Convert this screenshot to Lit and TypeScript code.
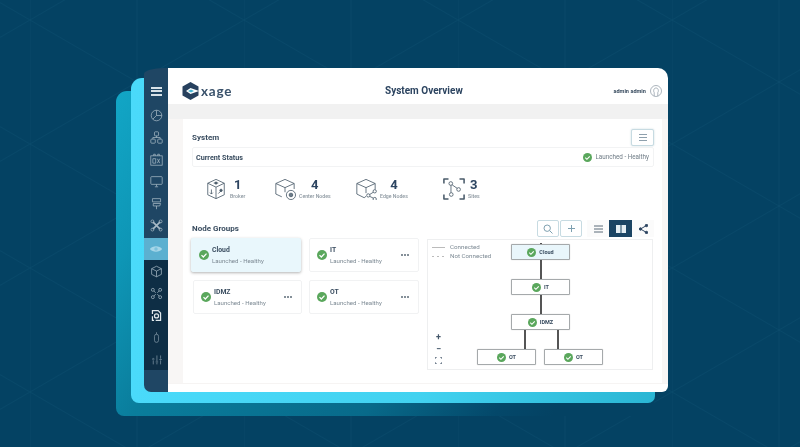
import { LitElement, html, css, svg } from "lit";
import { customElement } from "lit/decorators.js";

const check = (s = 10) => html`<svg class="check" width=${s} height=${s} viewBox="0 0 12 12"><circle cx="6" cy="6" r="6" fill="#5aa75c"/><path d="M3 6.2l2.2 2.2L9 4.4" fill="none" stroke="#fff" stroke-width="1.5"/></svg>`;

const navIcons = [
  svg`<circle cx="8" cy="8" r="6.5"/><path d="M8 1.500V8h6.500M8 8l-4.500 4.500"/>`,
  svg`<rect x="5.500" y="1" width="5" height="5" rx="1"/><rect x="1" y="10" width="5.500" height="5" rx="1"/><rect x="9.500" y="10" width="5.500" height="5" rx="1"/><path d="M8 6v2M3.500 10V8h9v2"/>`,
  svg`<rect x="1" y="3.500" width="14" height="11.500"/><path d="M4.500 3.500V1.500h2v2M9.500 3.500V1.500h2v2M3.500 7h3.500v5.500H3.500zM9 7l3 5.500M12 7l-3 5.500"/>`,
  svg`<rect x="1" y="2" width="14" height="9.500" rx="1"/><path d="M8 11.500V14M6 14.500h4"/>`,
  svg`<path d="M3 2h10v4H3zM4 8h9l-1 3H4zM8 11v4"/>`,
  svg`<path d="M3.500 3.500l9 9M12.500 3.500l-9 9" stroke-width="2"/><circle cx="3" cy="3" r="1.800"/><circle cx="13" cy="13" r="1.800"/><circle cx="13" cy="3" r="1.800"/><circle cx="3" cy="13" r="1.800"/>`,
];
const eye = svg`<path d="M1 8C4 3.800 12 3.800 15 8 12 12.200 4 12.200 1 8z" fill="#a6d6e8" stroke="none"/><circle cx="8" cy="8" r="2" fill="#7cc2dc" stroke="none"/>`;
const navIcons2 = [
  { c: "mid", i: svg`<path d="M8 1.500l6 3v7l-6 3-6-3v-7zM2 4.500l6 3 6-3M8 7.500v7"/>` },
  { c: "mid", i: svg`<circle cx="3.500" cy="3.500" r="1.800"/><circle cx="12.500" cy="3.500" r="1.800"/><circle cx="3.500" cy="12.500" r="1.800"/><circle cx="12.500" cy="12.500" r="1.800"/><path d="M5 5l2 2.200M11 5L9 7.200M5 11l2-2.200M11 11L9 8.800" />` },
  { c: "hi", i: svg`<path d="M3 6V2h7l3 3v9H7M3 9v5h2" stroke-width="1.500"/><circle cx="8" cy="8.500" r="2.500" stroke-width="1.500"/>` },
  { c: "lo", i: svg`<path d="M8 4a2.500 2.500 0 0 1 2.500 2.500v5a2.500 2.500 0 0 1-5 0v-5A2.500 2.500 0 0 1 8 4zM8 1.500V4"/>` },
  { c: "lo", i: svg`<path d="M4 14V9M4 7V6M8.500 14v-2M8.500 10V3M13 14V9M13 7V3"/><path d="M2.500 7.500h3M7 11h3M11.500 8h3"/>` },
];

const brokerIcon = svg`<path d="M12 1.500l9 4.200v12.600l-9 4.200-9-4.200V5.700zM3 5.700l9 4.300 9-4.300M12 10v12.500"/><path d="M7 12.500v5M5.500 16l1.500 1.500L8.500 16M14.500 17l3-3M9.500 5.500h5" stroke-width=".9"/><circle cx="17.500" cy="13.500" r="1.300" fill="#4a5b6a"/><circle cx="12" cy="5.500" r="1.200" fill="#4a5b6a"/>`;
const centerIcon = svg`<path d="M8.500 20.500L2 17.500V6L12 1.500 22 6v6M2 6l10 4.500L22 6M12 10.500v5"/><circle cx="18.500" cy="18.500" r="5"/><circle cx="18.500" cy="18.500" r="2" fill="#6b7b88"/>`;
const edgeIcon = svg`<path d="M12 20l-2 1.500-8-4V6L12 1.500 22 6v6.500M2 6l10 4.500L22 6M12 10.500v6"/><circle cx="21.500" cy="14.500" r="1.800"/><circle cx="14.500" cy="19" r="1.800"/><circle cx="21.500" cy="23" r="1.800"/><path d="M16 18l4-2.500M16 20l4 2"/>`;
const sitesIcon = svg`<path d="M1 6V1h5M18 1h5v5M1 18v5h5M23 18v5h-5" stroke-width="1.700"/><circle cx="8.500" cy="6" r="2"/><circle cx="17" cy="12.500" r="2"/><circle cx="9" cy="18" r="2"/><path d="M10 7.500l5.500 3.800M8.700 8v8"/>`;

const stats = [
  { n: "1", l: "Broker", i: brokerIcon, vb: "0 0 24 24" },
  { n: "4", l: "Center Nodes", i: centerIcon, vb: "0 0 24 24" },
  { n: "4", l: "Edge Nodes", i: edgeIcon, vb: "0 0 24 24" },
  { n: "3", l: "Sites", i: sitesIcon, vb: "0 0 24 24" },
];

@customElement("app-root")
export class AppRoot extends LitElement {
  static styles = css`
    :host { display: block; width: 800px; height: 447px; overflow: hidden; font-family: Roboto, "Liberation Sans", sans-serif; color: #3a4d60; }
    .desk { position: relative; width: 800px; height: 447px; background: #044263; overflow: hidden; filter: blur(0.5px); }
    .grid { position: absolute; inset: 0; }
    .back2 { position: absolute; left: 116px; top: 91px; width: 538px; height: 325px; border-radius: 11px 0 8px 8px; background: linear-gradient(120deg, #12a6c6 0%, #0e96b6 14%, #0a7d9c 28%, #086a8a 60%, #04486a 78%, #044263 86%); }
    .back1 { position: absolute; left: 131px; top: 78px; width: 524px; height: 325px; border-radius: 11px 0 7px 8px; background: linear-gradient(90deg, #4adafa 0%, #42d2f0 55%, #2ab6d4 100%); }
    .win { position: absolute; left: 144px; top: 68px; width: 524px; height: 324px; display: flex; }
    .side { width: 24px; flex: none; background: #1f4664; display: flex; flex-direction: column; align-items: center; padding-top: 12px; box-sizing: border-box; border-radius: 20px 0 0 7px / 6px 0 0 7px; }
    .row { height: 22px; width: 100%; flex: none; display: flex; align-items: center; justify-content: center; }
    .burger { width: 11px; height: 9px; border-top: 2px solid #d8e2e8; border-bottom: 2px solid #d8e2e8; position: relative; box-sizing: border-box; }
    .burger::after { content: ""; position: absolute; left: 0; right: 0; top: 1.5px; height: 2px; background: #d8e2e8; }
    .top-nav { margin-top: 2.5px; flex: none; width: 100%; }
    .side svg { fill: none; stroke: #a9bac6; stroke-width: .9; display: block; }
    .active { margin-top: 1.5px; background: #5cb0d0; }
    .low { flex: none; width: 100%; background: #0e2e45; }
    .side .mid svg { stroke: #a9bac6; }
    .side .hi svg { stroke: #e0e8ec; }
    .side .lo svg { stroke: #7f95a4; }
    .main { flex: 1; display: flex; flex-direction: column; min-width: 0; background: #fff; border-radius: 0 10px 6px 0; overflow: hidden; }
    .top { height: 36px; flex: none; display: flex; align-items: center; justify-content: space-between; padding: 10px 6px 0 14px; box-sizing: border-box; position: relative; }
    .logo { display: flex; align-items: center; gap: 2px; font-family: Lato, sans-serif; font-size: 13.5px; font-weight: 700; letter-spacing: .8px; color: #3a526b; }
    .title { position: absolute; left: 217px; top: 16px; font-size: 10px; line-height: 14px; font-weight: 700; color: #2c4460; }
    .user { display: flex; align-items: center; gap: 4px; font-size: 5.6px; font-weight: 700; color: #3a4d60; }
    .band { height: 15px; flex: none; background: #f1f1f1; }
    .body { flex: 1; background: #f8f6f5; padding: 0 6px 0 15px; margin-bottom: 8px; display: flex; min-height: 0; border-bottom: 1px solid #f6f4f3; }
    .panel { flex: 1; background: #fff; display: flex; flex-direction: column; padding: 10px 8px 0 9px; min-width: 0; }
    .sys { display: flex; align-items: center; justify-content: space-between; height: 17px; flex: none; font-size: 8px; font-weight: 700; letter-spacing: .05px; }
    .box-btn { width: 23px; height: 17px; border: 1px solid #c7dbe2; border-radius: 2px; display: flex; align-items: center; justify-content: center; background: #fff; box-sizing: border-box; box-shadow: 0 0 2px rgba(120,160,175,.4); }
    .lines { width: 8px; height: 5px; border-top: 1px solid #8ea0ad; border-bottom: 1px solid #8ea0ad; position: relative; }
    .lines::after { content: ""; position: absolute; left: 0; right: 0; top: 2px; height: 1px; background: #8ea0ad; }
    .status { margin-top: 1px; height: 20px; flex: none; border: 1px solid #f2f3f4; border-radius: 2px; display: flex; align-items: center; justify-content: space-between; padding: 0 4px 0 3px; box-sizing: border-box; font-size: 7.2px; }
    .status b { font-weight: 700; }
    .health { display: flex; align-items: center; gap: 3px; color: #6f7c86; font-size: 6.3px; }
    .stats { height: 43px; flex: none; display: flex; align-items: center; padding-left: 13px; }
    .stat { display: flex; align-items: center; gap: 3px; }
    .stat:nth-child(1) { width: 69px; } .stat:nth-child(2) { width: 81px; } .stat:nth-child(3) { width: 88px; }
    .stat svg { fill: none; stroke: #4a5b6a; stroke-width: .9; stroke-linejoin: round; flex: none; }
    .stat .t { display: flex; flex-direction: column; align-items: center; gap: 2px; }
    .stat .n { font-size: 13px; line-height: 12px; font-weight: 700; color: #2c4460; }
    .stat .l { font-size: 5.2px; line-height: 6px; color: #8b969f; font-weight: 500; }
    .ng-head { display: flex; align-items: center; justify-content: space-between; height: 17px; flex: none; margin-top: 10px; font-size: 8px; font-weight: 700; }
    .tools { display: flex; align-items: center; }
    .tool { width: 22px; height: 17px; border: 1px solid #c7dbe2; border-radius: 2px; display: flex; align-items: center; justify-content: center; margin-right: 1px; background: #fff; box-sizing: border-box; }
    .seg { width: 22px; height: 17px; display: flex; align-items: center; justify-content: center; background: #fbfbfb; }
    .seg.first { margin-left: 4px; }
    .seg.on { width: 23px; background: #1b4463; }
    .content { display: flex; margin-top: 1px; flex: 1; min-height: 0; align-items: flex-start; }
    .cards { width: 235px; flex: none; display: grid; grid-template-columns: 110px 110px; grid-auto-rows: 34px; gap: 8px 7px; }
    .card { border: 1px solid #f1f2f3; border-radius: 2px; display: flex; align-items: center; padding-left: 7px; gap: 3px; position: relative; background: #fff; }
    .card.sel { background: #e9f7fc; border-color: #e9f7fc; margin: 0 1px 0 -1px; box-shadow: 0 1px 3px rgba(0,0,0,.3); }
    .card.in { margin-left: 1px; }
    .card .nm { font-size: 6.8px; font-weight: 700; line-height: 9px; }
    .card .st { font-size: 6.1px; color: #7d8a94; line-height: 9px; margin-top: 1px; }
    .dots { position: absolute; right: 9px; top: 15px; display: flex; gap: 1px; }
    .dots i { width: 2px; height: 2px; border-radius: 50%; background: #5c6b77; }
    .graph { width: 226px; height: 131px; margin-top: 1px; flex: none; border: 1px solid #eeeff0; box-sizing: border-box; position: relative; }
    .legend { position: absolute; left: 4px; top: 2.5px; display: grid; grid-template-columns: 13px auto; column-gap: 5px; font-size: 6.2px; line-height: 9px; color: #7d8a94; align-items: center; }
    .legend i { display: block; height: 1px; background: #bbb; }
    .legend i.d { background: repeating-linear-gradient(90deg, #bbb 0 1.5px, transparent 1.5px 5px); }
    .zoomer { position: absolute; left: 4px; bottom: 5px; width: 13px; display: flex; flex-direction: column; align-items: center; color: #44576a; font-size: 9px; line-height: 12px; font-weight: 700; }
    .zoomer svg { display: block; margin-top: 2.5px; }
    .node { position: absolute; width: 59px; height: 16px; box-sizing: border-box; border: 1px solid #a5a9ab; border-radius: 1px; background: #fff; display: flex; align-items: center; justify-content: center; gap: 3px; font-size: 5.5px; font-weight: 700; box-shadow: 0 0 1px rgba(0,0,0,.3); }
    .node.sel { background: #e9f6fb; }
    .link { position: absolute; width: 1.5px; background: #555; }
  `;

  card(name: string, cls = "") {
    return html`<div class="card ${cls}">${check(10)}<div><div class="nm">${name}</div><div class="st">Launched - Healthy</div></div>${cls !== "sel" ? html`<div class="dots"><i></i><i></i><i></i></div>` : ""}</div>`;
  }
  node(name: string, x: number, y: number, sel = false) {
    return html`<div class="node ${sel ? "sel" : ""}" style="left:${x}px;top:${y}px">${check(9)}<span>${name}</span></div>`;
  }
  link(x: number, y: number, h: number) {
    return html`<div class="link" style="left:${x}px;top:${y}px;height:${h}px"></div>`;
  }

  render() {
    return html`<div class="desk">
      <svg class="grid" width="800" height="447">
        <defs>
          <pattern id="lat" width="214" height="124" patternUnits="userSpaceOnUse" patternTransform="translate(30 20)">
            <path d="M0 0L214 124M0 124L214 0M107 0V124M0 0V124" fill="none" stroke="#14597c" stroke-width=".7" opacity=".35"/>
          </pattern>
        </defs>
        <rect width="800" height="447" fill="url(#lat)"/>
      </svg>
      <div class="back2"></div>
      <div class="back1"></div>
      <div class="win">
        <nav class="side">
          <div class="row"><div class="burger"></div></div>
          <div class="top-nav">
            ${navIcons.map((i) => html`<div class="row"><svg width="13" height="13" viewBox="0 0 16 16">${i}</svg></div>`)}
          </div>
          <div class="row active"><svg width="14" height="14" viewBox="0 0 16 16">${eye}</svg></div>
          <div class="low">
            ${navIcons2.map((n) => html`<div class="row ${n.c}"><svg width="13" height="13" viewBox="0 0 16 16">${n.i}</svg></div>`)}
          </div>
        </nav>
        <div class="main">
          <header class="top">
            <div class="logo">
              <svg width="17" height="18" viewBox="0 0 17 18"><path d="M8.500 0l8 4.500v9l-8 4.500-8-4.500v-9z" fill="#27415e"/><path d="M8.500 6L17 9l-8.500 3L4 9z" fill="#fff"/><path d="M9 7.500L12 9l-3 1.500L6 9z" fill="#48b7d6"/></svg>
              <span>xage</span>
            </div>
            <div class="title">System Overview</div>
            <div class="user"><span>admin admin</span>
              <svg width="12" height="12" viewBox="0 0 12 12" fill="none" stroke="#8a97a2" stroke-width=".7"><circle cx="6" cy="6" r="5.500"/><path d="M4.200 11V7.500c-1-1-.8-4.500 1.800-4.500s2.800 3.500 1.800 4.500V11"/></svg>
            </div>
          </header>
          <div class="band"></div>
          <div class="body">
            <section class="panel">
              <div class="sys"><span>System</span><div class="box-btn"><div class="lines"></div></div></div>
              <div class="status"><b>Current Status</b><div class="health">${check(9)}<span>Launched - Healthy</span></div></div>
              <div class="stats">
                ${stats.map((s) => html`<div class="stat"><svg width="22" height="22" viewBox=${s.vb}>${s.i}</svg><div class="t"><span class="n">${s.n}</span><span class="l">${s.l}</span></div></div>`)}
              </div>
              <div class="ng-head"><span>Node Groups</span>
                <div class="tools">
                  <div class="tool"><svg width="10" height="10" viewBox="0 0 10 10" fill="none" stroke="#7ea0b0"><circle cx="4.200" cy="4.200" r="3.200"/><path d="M6.700 6.700L9.500 9.500"/></svg></div>
                  <div class="tool"><svg width="7" height="7" viewBox="0 0 7 7" stroke="#7ea0b0"><path d="M3.500 0v7M0 3.500h7"/></svg></div>
                  <div class="seg first"><svg width="9" height="8" viewBox="0 0 9 8" stroke="#5b6b78"><path d="M0 1h9M0 4h9M0 7h9"/></svg></div>
                  <div class="seg on"><svg width="10" height="8" viewBox="0 0 10 8" fill="#e4edf2"><rect width="4.500" height="8"/><rect x="5.500" width="4.500" height="8"/></svg></div>
                  <div class="seg"><svg width="9" height="10" viewBox="0 0 9 10" fill="#2c4460" stroke="#2c4460" stroke-width="1"><path d="M7.500 1.500L1.500 5l6 3.500" fill="none"/><circle cx="7.500" cy="1.500" r="1.200"/><circle cx="1.500" cy="5" r="1.200"/><circle cx="7.500" cy="8.500" r="1.200"/></svg></div>
                </div>
              </div>
              <div class="content">
                <div class="cards">
                  ${this.card("Cloud", "sel")}${this.card("IT")}${this.card("IDMZ", "in")}${this.card("OT")}
                </div>
                <div class="graph">
                  <div class="legend"><i></i><span>Connected</span><i class="d"></i><span>Not Connected</span></div>
                  ${this.link(112, 3, 1)}${this.link(112, 20, 19)}${this.link(112, 55, 19)}${this.link(96, 90, 19)}${this.link(129, 90, 19)}
                  ${this.node("Cloud", 83, 4, true)}${this.node("IT", 83, 39)}${this.node("IDMZ", 83, 74)}${this.node("OT", 49, 109)}${this.node("OT", 116, 109)}
                  <div class="zoomer"><span>+</span><span>−</span><svg width="7" height="7" viewBox="0 0 7 7" fill="none" stroke="#44576a"><path d="M0 2V0h2M5 0h2v2M0 5v2h2M5 7h2V5"/></svg></div>
                </div>
              </div>
            </section>
          </div>
        </div>
      </div>
    </div>`;
  }
}
